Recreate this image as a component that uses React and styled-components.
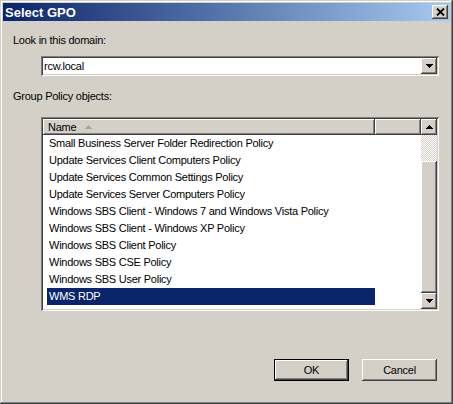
import styled, { createGlobalStyle } from 'styled-components';

const Global = createGlobalStyle`
  body { margin: 0; background: #d4d0c8; }
  * { box-sizing: border-box; }
`;

const raised = `
  background: #d4d0c8;
  box-shadow: inset -1px -1px #404040, inset 1px 1px #ffffff, inset -2px -2px #808080, inset 2px 2px #d4d0c8;
`;

const sunken = `
  box-shadow: inset 1px 1px #808080, inset -1px -1px #ffffff, inset 2px 2px #404040, inset -2px -2px #d4d0c8;
`;

const Window = styled.div`
  width: 453px;
  height: 404px;
  padding: 3px;
  background: #d4d0c8;
  display: flex;
  flex-direction: column;
  font-family: "Liberation Sans", Arial, sans-serif;
  font-size: 11px;
  letter-spacing: -0.25px;
  color: #000;
  box-shadow: inset -1px -1px #404040, inset 1px 1px #d4d0c8, inset -2px -2px #808080, inset 2px 2px #ffffff;
`;

const TitleBar = styled.div`
  height: 18px;
  display: flex;
  align-items: center;
  justify-content: space-between;
  padding: 0 2px 0 2px;
  background: linear-gradient(to right, #0a246a, #a6caf0);
`;

const Title = styled.span`
  color: #fff;
  font-weight: bold;
  font-size: 13px;
  letter-spacing: 0;
`;

const CloseButton = styled.div`
  ${raised}
  width: 16px;
  height: 14px;
  display: flex;
  align-items: center;
  justify-content: center;
  padding-bottom: 1px;
`;

const Body = styled.div`
  flex: 1;
  display: flex;
  flex-direction: column;
  padding: 13px 11px 0 10px;
`;

const Label = styled.div`
  line-height: 13px;
  margin-top: ${p => p.$top || 0}px;
`;

const Combo = styled.div`
  ${sunken}
  margin: 9px 0 0 28px;
  height: 20px;
  padding: 2px;
  background: #fff;
  display: flex;
  align-items: center;
`;

const ComboText = styled.div`
  flex: 1;
  padding-left: 1px;
  line-height: 16px;
`;

const ArrowButton = styled.div`
  ${raised}
  width: 16px;
  height: 16px;
  display: flex;
  align-items: center;
  justify-content: center;
`;

const ListBox = styled.div`
  ${sunken}
  margin: 14px 0 0 28px;
  height: 194px;
  padding: 2px;
  background: #fff;
  display: grid;
  grid-template-columns: 1fr 16px;
`;

const ListMain = styled.div`
  display: flex;
  flex-direction: column;
  overflow: hidden;
`;

const Header = styled.div`
  display: flex;
  height: 16px;
`;

const HeaderCell = styled.div`
  ${raised}
  width: ${p => p.$w}px;
  height: 16px;
  line-height: 15px;
  padding-left: 5px;
  display: flex;
  align-items: center;
  gap: 9px;
`;

const Rows = styled.div`
  padding-left: 4px;
`;

const Row = styled.div`
  width: 328px;
  height: 17px;
  line-height: 17px;
  padding-left: 2px;
  white-space: nowrap;
  background: ${p => (p.$selected ? '#0a246a' : 'transparent')};
  color: ${p => (p.$selected ? '#fff' : '#000')};
`;

const ScrollBar = styled.div`
  display: flex;
  flex-direction: column;
`;

const Track = styled.div`
  height: 26px;
  background: repeating-conic-gradient(#d4d0c8 0 25%, #ffffff 0 50%) 0 0 / 2px 2px;
`;

const Thumb = styled.div`
  ${raised}
  flex: 1;
`;

const Buttons = styled.div`
  display: flex;
  justify-content: flex-end;
  gap: 13px;
  margin-top: 48px;
  padding-right: 2px;
`;

const Button = styled.div`
  ${raised}
  width: 75px;
  height: 22px;
  display: flex;
  align-items: center;
  justify-content: center;
  ${p =>
    p.$default &&
    `box-shadow: inset 0 0 0 1px #000, inset -2px -2px #404040, inset 2px 2px #ffffff, inset -3px -3px #808080;`}
`;

const Arrow = ({ up, color = '#000' }) => (
  <svg width="7" height="4" viewBox="0 0 7 4" shapeRendering="crispEdges">
    {up ? (
      <polygon points="3.5,0 7,4 0,4" fill={color} />
    ) : (
      <polygon points="0,0 7,0 3.5,4" fill={color} />
    )}
  </svg>
);

const CloseIcon = () => (
  <svg width="9" height="8" viewBox="0 0 9 8">
    <path d="M1 0.5 L8 7.5 M8 0.5 L1 7.5" stroke="#000" strokeWidth="1.8" />
  </svg>
);

const policies = [
  'Small Business Server Folder Redirection Policy',
  'Update Services Client Computers Policy',
  'Update Services Common Settings Policy',
  'Update Services Server Computers Policy',
  'Windows SBS Client - Windows 7 and Windows Vista Policy',
  'Windows SBS Client - Windows XP Policy',
  'Windows SBS Client Policy',
  'Windows SBS CSE Policy',
  'Windows SBS User Policy',
  'WMS RDP',
];

const App = () => {
  return (
    <Window>
      <Global />
      <TitleBar>
        <Title>Select GPO</Title>
        <CloseButton>
          <CloseIcon />
        </CloseButton>
      </TitleBar>
      <Body>
        <Label>Look in this domain:</Label>
        <Combo>
          <ComboText>rcw.local</ComboText>
          <ArrowButton>
            <Arrow />
          </ArrowButton>
        </Combo>
        <Label $top={14}>Group Policy objects:</Label>
        <ListBox>
          <ListMain>
            <Header>
              <HeaderCell $w={332}>
                Name
                <Arrow up color="#aca899" />
              </HeaderCell>
              <HeaderCell $w={46} />
            </Header>
            <Rows>
              {policies.map(p => (
                <Row key={p} $selected={p === 'WMS RDP'}>
                  {p}
                </Row>
              ))}
            </Rows>
          </ListMain>
          <ScrollBar>
            <ArrowButton>
              <Arrow up />
            </ArrowButton>
            <Track />
            <Thumb />
            <ArrowButton>
              <Arrow />
            </ArrowButton>
          </ScrollBar>
        </ListBox>
        <Buttons>
          <Button $default>OK</Button>
          <Button>Cancel</Button>
        </Buttons>
      </Body>
    </Window>
  );
};

export default App;
